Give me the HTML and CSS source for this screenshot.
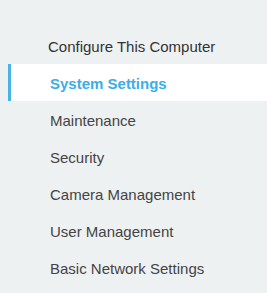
FILE: index.html
```html
<!DOCTYPE html>
<html lang="en">
  <head>
    <meta charset="UTF-8" />
    <meta name="viewport" content="width=device-width, initial-scale=1.0" />
    <title>Settings</title>
    <link rel="stylesheet" href="styles.css">
  </head>
  <body>
    <nav class="side-menu">
      <div class="menu-title">Configure This Computer</div>
      <ul class="menu-list">
        <li class="menu-item active">System Settings</li>
        <li class="menu-item">Maintenance</li>
        <li class="menu-item">Security</li>
        <li class="menu-item">Camera Management</li>
        <li class="menu-item">User Management</li>
        <li class="menu-item">Basic Network Settings</li>
      </ul>
    </nav>
  </body>
</html>
```

FILE: styles.css
```css
* {
  box-sizing: border-box;
}

body {
  margin: 0;
  background-color: #eef1f2;
  font-family: "Liberation Sans", Arial, sans-serif;
  font-size: 15px;
  color: #444;
}

.side-menu {
  padding-top: 27px;
  padding-left: 8px;
}

.menu-title {
  height: 37px;
  line-height: 37px;
  padding-top: 1px;
  padding-left: 40px;
  color: #333;
}

.menu-list {
  list-style: none;
  margin: 0;
  padding: 0;
}

.menu-item {
  height: 37px;
  line-height: 37px;
  padding-top: 1px;
  padding-left: 39px;
  border-left: 3px solid transparent;
  white-space: nowrap;
}

.menu-item.active {
  background-color: #fff;
  border-left-color: #4ab3e6;
  color: #3aaee6;
  font-weight: bold;
}
```
